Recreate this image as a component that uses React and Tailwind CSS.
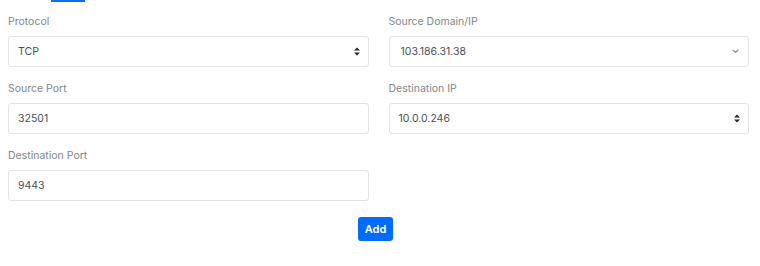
import { useState } from 'react';

function SortIcon() {
  return (
    <svg width="6" height="9" viewBox="0 0 6 9" className="text-[#212529]">
      <path d="M0 3.6 L3 0.4 L6 3.6 Z" fill="currentColor" />
      <path d="M0 5.4 L3 8.6 L6 5.4 Z" fill="currentColor" />
    </svg>
  );
}

function ChevronIcon() {
  return (
    <svg width="7" height="5" viewBox="0 0 7 5" fill="none" className="mr-[1px]">
      <path d="M1 1 L3.5 3.5 L6 1" stroke="#8a9096" strokeWidth="1.1" strokeLinecap="round" strokeLinejoin="round" />
    </svg>
  );
}

function Field({ label, children }) {
  return (
    <div>
      <label className="block text-[10.5px] leading-[16px] text-[#80868c] mb-[6px]">{label}</label>
      {children}
    </div>
  );
}

function Box({ value, icon, inset }) {
  return (
    <div className="h-[31px] flex items-center justify-between border border-[#e2e5e8] rounded-[3px] bg-white pr-[8px]">
      <span className={`text-[10.5px] text-[#495057] ${inset ? 'pl-[11px]' : 'pl-[9px]'}`}>{value}</span>
      {icon}
    </div>
  );
}

export default function App() {
  const [rule] = useState({
    protocol: 'TCP',
    sourceDomain: '103.186.31.38',
    sourcePort: '32501',
    destinationIp: '10.0.0.246',
    destinationPort: '9443'
  });

  return (
    <div className="bg-white w-[760px] h-[266px] pl-2 pr-[11px]" style={{ fontFamily: "Inter, 'Noto Sans', sans-serif" }}>
      <div className="ml-[43px] w-[34px] h-[2px] bg-[#0d6efd]"></div>

      <div className="grid grid-cols-2 gap-x-5 gap-y-[14px] pt-[12px]">
        <Field label="Protocol">
          <Box value={rule.protocol} icon={<SortIcon />} />
        </Field>
        <Field label="Source Domain/IP">
          <Box value={rule.sourceDomain} icon={<ChevronIcon />} inset />
        </Field>
        <Field label="Source Port">
          <Box value={rule.sourcePort} />
        </Field>
        <Field label="Destination IP">
          <Box value={rule.destinationIp} icon={<SortIcon />} />
        </Field>
        <Field label="Destination Port">
          <Box value={rule.destinationPort} />
        </Field>
      </div>

      <div className="flex justify-center mt-4 pr-[6px]">
        <button className="w-[35px] h-[24px] rounded-[3px] bg-[#006cff] text-white text-[11px] font-semibold">
          Add
        </button>
      </div>
    </div>
  );
}
